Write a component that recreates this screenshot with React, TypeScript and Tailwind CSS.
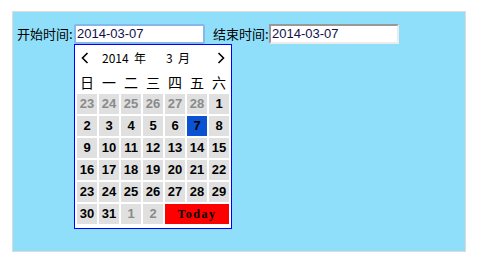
import React from 'react';

const cjk = { fontFamily: '"Noto Sans CJK SC", "Liberation Sans", sans-serif' };

const weekdays = ['日', '一', '二', '三', '四', '五', '六'];

type Cell = { d: number; other?: boolean; selected?: boolean };

const days: Cell[] = [
    ...[23, 24, 25, 26, 27, 28].map((d) => ({ d, other: true })),
    ...Array.from({ length: 31 }, (_, i) => ({ d: i + 1, selected: i + 1 === 7 })),
    { d: 1, other: true },
    { d: 2, other: true },
];

function Chevron({ dir }: { dir: 'left' | 'right' }) {
    return (
        <svg width="8" height="12" viewBox="0 0 8 12" className="block">
            <path
                d={dir === 'left' ? 'M6.5 1 L1.5 6 L6.5 11' : 'M1.5 1 L6.5 6 L1.5 11'}
                fill="none"
                stroke="#000"
                strokeWidth="1.6"
            />
        </svg>
    );
}

function DatePopup() {
    return (
        <div className="absolute left-0 top-[20px] w-[158px] border border-[#0000ff] bg-white z-10">
            {/* month header */}
            <div className="h-[26px] flex items-center text-[12px] text-black" style={cjk}>
                <span className="ml-[6px]"><Chevron dir="left" /></span>
                <span className="ml-[13px]">2014&nbsp;&nbsp;年</span>
                <span className="ml-[20px]">3&nbsp;&nbsp;月</span>
                <span className="ml-auto mr-[6px]"><Chevron dir="right" /></span>
            </div>
            {/* weekdays */}
            <div className="grid grid-cols-7 gap-x-[2px] px-[2px] h-[22px] items-center text-[14px] text-black" style={cjk}>
                {weekdays.map((w) => (
                    <div key={w} className="text-center leading-none">{w}</div>
                ))}
            </div>
            {/* days */}
            <div
                className="grid grid-cols-[repeat(7,20px)] auto-rows-[20px] gap-[2px] px-[2px] pt-[1px] pb-[4px] text-[13px] font-bold"
                style={{ fontFamily: '"Liberation Sans", Arial, sans-serif' }}
            >
                {days.map((c, i) => (
                    <div
                        key={i}
                        className={
                            'flex items-center justify-center ' +
                            (c.selected
                                ? 'bg-[#0a52d2] text-black'
                                : c.other
                                ? 'bg-[#e0e0e0] text-[#8a8a8a]'
                                : 'bg-[#e0e0e0] text-black')
                        }
                    >
                        {c.d}
                    </div>
                ))}
                <div
                    className="col-span-3 bg-[#ff0000] flex items-center justify-center text-[12px] font-bold tracking-[1.5px] text-black"
                    style={{ fontFamily: '"Liberation Serif", serif' }}
                >
                    Today
                </div>
            </div>
        </div>
    );
}

export default function App() {
    return (
        <div className="w-[494px] h-[265px] bg-white pt-[11px] pl-[12px]">
            <div className="w-[454px] h-[241px] bg-[#8fdffa] border border-[#dcdcdc] pt-[12px] pl-[4px]">
                <div className="flex items-center text-[13px] text-black" style={cjk}>
                    <span className="w-[57px]">开始时间:</span>
                    <div className="relative">
                        <div
                            className="w-[131px] h-[20px] bg-white border-2 border-[#86b8ea] rounded-[2px] flex items-center pl-[1px] text-[13px] text-[#10104a]"
                            style={{ fontFamily: '"Liberation Sans", Arial, sans-serif' }}
                        >
                            2014-03-07
                        </div>
                        <DatePopup />
                    </div>
                    <span className="ml-[8px] w-[56px]">结束时间:</span>
                    <div
                        className="w-[130px] h-[20px] bg-white border-2 border-t-[#999] border-l-[#999] border-b-[#ececec] border-r-[#ececec] flex items-center pl-[1px] text-[13px] text-[#10104a]"
                        style={{ fontFamily: '"Liberation Sans", Arial, sans-serif' }}
                    >
                        2014-03-07
                    </div>
                </div>
            </div>
        </div>
    );
}
